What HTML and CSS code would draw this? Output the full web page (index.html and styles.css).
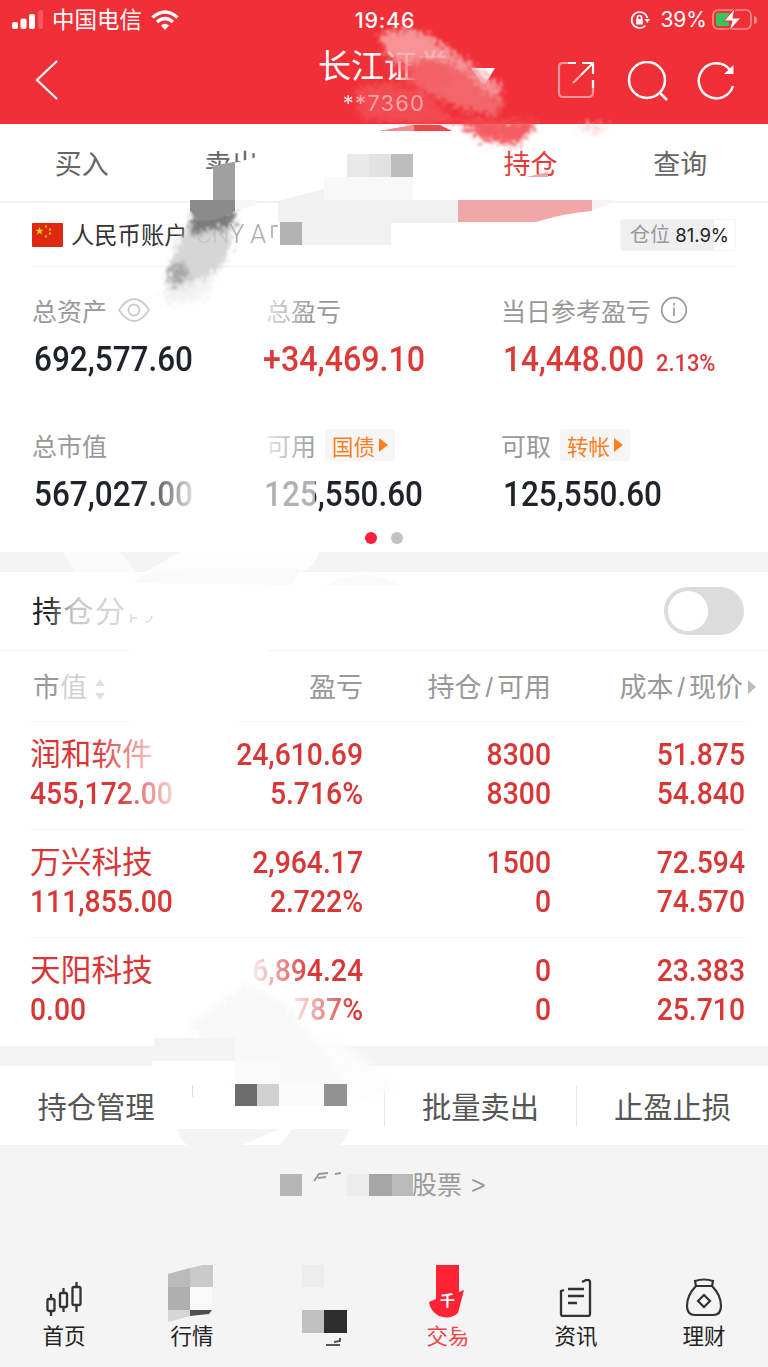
FILE: index.html
```
<!DOCTYPE html>
<html lang="zh-CN">
<head>
  <meta charset="UTF-8">
  <meta name="viewport" content="width=device-width, initial-scale=1.0">
  <title>持仓</title>
  <link rel="stylesheet" href="styles.css">
</head>
<body>
<header>
  <div class="status">
    <div class="status-left">
      <svg width="32" height="20" viewBox="0 0 32 20" fill="#fff"><rect x="0" y="12" width="6" height="7" rx="2"/><rect x="8.5" y="8.500" width="6" height="10.500" rx="2"/><rect x="17" y="4" width="6" height="15" rx="2"/><rect x="26" y="0" width="5" height="19" rx="2" opacity=".2"/></svg>
      <span class="carrier">中国电信</span>
      <svg class="wifi" width="28" height="20" viewBox="0 0 28 20" fill="none" stroke="#fff" stroke-width="3.600"><path d="M1.500 7.500Q14-3.500 26.500 7.500M6 12Q14 5 22 12"/><path d="M14 20l-4-4.500q4-3.500 8 0z" fill="#fff" stroke="none"/></svg>
    </div>
    <span class="time">19:46</span>
    <div class="status-right">
      <svg width="20" height="20" viewBox="0 0 20 20" fill="none" stroke="#fff" stroke-width="1.700"><path d="M15.500 15.500A8 8 0 1 1 17.400 8"/><path d="M14.500 9h5.500l-2.700 4z" fill="#fff" stroke="none"/><rect x="6.200" y="9" width="6.600" height="5.500" fill="#fff" stroke="none"/><path d="M7.500 9V7.500a2 2 0 0 1 4 0V9"/></svg>
      <span class="percent">39%</span>
      <svg width="46" height="24" viewBox="0 0 46 24"><rect x="1" y="2" width="38" height="19" rx="5" fill="none" stroke="#fff" stroke-opacity=".45" stroke-width="1.600"/><path d="M6 5h11v13H6q-2 0-2-2V7q0-2 2-2z" fill="#33c759"/><path d="M42 8q3 1 3 4t-3 4z" fill="#fff" opacity=".5"/><path d="M23 0L12 13h8l-3 10 12-13h-8z" fill="#fff" stroke="#f02f36"/></svg>
    </div>
  </div>
  <div class="nav">
    <svg class="back" width="24" height="42" viewBox="0 0 24 42" fill="none" stroke="#fff" stroke-width="2.200"><path d="M22 2L2 21l20 19"/></svg>
    <div class="title">
      <div>
        <h1>长江证券</h1>
        <p>**7360</p>
      </div>
      <svg width="24" height="20" viewBox="0 0 24 20"><path d="M0 0h24L13 18z" fill="#fff"/></svg>
    </div>
    <div class="tools">
      <svg width="38" height="38" viewBox="0 0 38 38" fill="none" stroke="#fff" stroke-width="2.200"><path d="M11 2H6Q2 2 2 6V31Q2 36 6 36H31Q36 36 36 31V20" opacity=".5"/><path d="M11 2h8M25 2h11v11M36 2L24 14M36 19v8"/><path d="M24 14l-8 8" opacity=".6"/></svg>
      <svg width="42" height="40" viewBox="0 0 42 40" fill="none" stroke="#fff" stroke-width="2.500"><circle cx="20" cy="19" r="18"/><path d="M32 31l8 8"/></svg>
      <svg width="40" height="40" viewBox="0 0 40 40" fill="none" stroke="#fff" stroke-width="2.500"><path d="M36 25A17.500 17.500 0 1 1 33 9"/><path d="M36.500 4v9H27z" fill="#fff" stroke="none"/></svg>
    </div>
  </div>
</header>

<nav class="tabs">
  <span>买入</span><span>卖出</span><span></span><span class="on">持仓</span><span>查询</span>
</nav>

<section class="account">
  <div class="account-row">
    <svg width="31" height="24" viewBox="0 0 31 24"><rect width="31" height="24" rx="1" fill="#de2910"/><path d="M7.500 4l1 2.700h2.900L9.100 8.500l.9 2.900-2.500-1.700L5 11.400l.9-2.900-2.300-1.800h2.900z" fill="#ffde00"/><g fill="#f5a50c"><circle cx="14" cy="3.500" r="1.200"/><circle cx="18" cy="6.500" r="1.200"/><circle cx="18" cy="10.500" r="1.200"/><circle cx="14" cy="13.500" r="1.200"/></g></svg>
    <span class="account-name">人民币账户</span>
    <span class="account-en">CNY A</span>
    <span class="position"><i>仓位</i> 81.9%</span>
  </div>
  <div class="summary">
    <div>
      <p class="label">总资产 <svg class="eye" width="32" height="24" viewBox="0 0 32 24" fill="none" stroke="#ccc" stroke-width="1.800"><path d="M1 12Q8 1 16 1t15 11Q24 23 16 23T1 12z"/><circle cx="16" cy="12" r="5.500"/></svg></p>
      <p class="value"><b>692,577.60</b></p>
    </div>
    <div>
      <p class="label">总盈亏</p>
      <p class="value red plus"><b>+34,469.10</b></p>
    </div>
    <div>
      <p class="label">当日参考盈亏 <svg class="info" width="28" height="28" viewBox="0 0 28 28" fill="none" stroke="#999" stroke-width="1.700"><circle cx="14" cy="14" r="12.300"/><path d="M14 11.500V20M14 7v2.500"/></svg></p>
      <p class="value red"><b>14,448.00</b><small>2.13%</small></p>
    </div>
    <div>
      <p class="label">总市值</p>
      <p class="value"><b>567,027.00</b></p>
    </div>
    <div>
      <p class="label">可用 <span class="chip">国债<svg width="9" height="14" viewBox="0 0 9 14"><path d="M0 0l9 7-9 7z" fill="#ff7f1e"/></svg></span></p>
      <p class="value usable"><b>125,550.60</b></p>
    </div>
    <div>
      <p class="label">可取 <span class="chip">转帐<svg width="9" height="14" viewBox="0 0 9 14"><path d="M0 0l9 7-9 7z" fill="#ff7f1e"/></svg></span></p>
      <p class="value"><b>125,550.60</b></p>
    </div>
  </div>
  <div class="dots"><i class="on"></i><i></i></div>
</section>

<section class="holdings">
  <div class="holdings-head">
    <h2>持仓分</h2>
    <span class="switch"></span>
  </div>
  <div class="grid thead">
    <span>市值 <svg width="10" height="24" viewBox="0 0 10 24" fill="#bbb"><path d="M5 2l5 7H0zM5 23l5-7H0z"/></svg></span>
    <span>盈亏</span><span>持仓<i>/</i>可用</span>
    <span>成本<i>/</i>现价<svg class="more" width="8" height="14" viewBox="0 0 8 14"><path d="M0 0l8 7-8 7z" fill="#bbb"/></svg></span>
  </div>
  <div class="grid row">
    <div><em>润和软件</em><b>455,172.00</b></div>
    <div><b>24,610.69</b><b>5.716%</b></div>
    <div><b>8300</b><b>8300</b></div>
    <div><b>51.875</b><b>54.840</b></div>
  </div>
  <div class="grid row">
    <div><em>万兴科技</em><b>111,855.00</b></div>
    <div><b>2,964.17</b><b>2.722%</b></div>
    <div><b>1500</b><b>0</b></div>
    <div><b>72.594</b><b>74.570</b></div>
  </div>
  <div class="grid row">
    <div><em>天阳科技</em><b>0.00</b></div>
    <div><b>6,894.24</b><b>787%</b></div>
    <div><b>0</b><b>0</b></div>
    <div><b>23.383</b><b>25.710</b></div>
  </div>
</section>

<section class="actions">
  <span>持仓管理</span><span></span><span>批量卖出</span><span>止盈止损</span>
</section>

<p class="stock-link">股票 &gt;</p>

<footer>
  <div>
    <svg width="38" height="36" viewBox="0 0 38 36" fill="none" stroke="#333" stroke-width="2.300"><rect x="2.500" y="18" width="7" height="12" rx="1.500"/><path d="M6 13v5M6 30v5"/><rect x="15" y="12" width="7" height="14" rx="1.500"/><path d="M18.500 7v5M18.500 26v5"/><rect x="27.500" y="6" width="8" height="18" rx="1.500"/><path d="M31.500 1v5M31.500 24v7"/></svg>
    <span>首页</span>
  </div>
  <div><span>行情</span></div>
  <div></div>
  <div class="on"><span>交易</span></div>
  <div>
    <svg width="34" height="38" viewBox="0 0 34 38" fill="none" stroke="#333" stroke-width="2.300"><path d="M5 11l-3 1V35q0 2 2 2H29q2 0 2-2V3q0-2-2-2h-2l-4 2M9 10h16M9 17h16M9 24h9"/></svg>
    <span>资讯</span>
  </div>
  <div>
    <svg width="38" height="39" viewBox="0 0 38 39" fill="none" stroke="#333" stroke-width="2.200"><path d="M11 8L10 3q9-3 18 0l-1 5"/><path d="M11 8h16q9 9 9 20 0 9-8 9H10q-8 0-8-9Q2 17 11 8z"/><path d="M19 17l6 6-6 6-6-6z"/></svg>
    <span>理财</span>
  </div>
</footer>

<!-- brush and mosaic marks over the private parts -->
<svg class="marks" width="768" height="1367" viewBox="0 0 768 1367">
  <defs>
    <filter id="rough" x="-20%" y="-20%" width="140%" height="140%"><feTurbulence type="fractalNoise" baseFrequency=".3" numOctaves="3"/><feDisplacementMap in="SourceGraphic" scale="26" xChannelSelector="R" yChannelSelector="G"/><feGaussianBlur stdDeviation="1.600"/></filter>
    <filter id="soft" x="-20%" y="-20%" width="140%" height="140%"><feGaussianBlur stdDeviation="5"/></filter>
    <linearGradient id="fade"><stop offset="0" stop-color="#fff" stop-opacity="0"/><stop offset="1" stop-color="#fff"/></linearGradient>
    <linearGradient id="fadeLeft"><stop offset="0" stop-color="#fff"/><stop offset="1" stop-color="#fff" stop-opacity="0"/></linearGradient>
    <linearGradient id="fadeTitle"><stop offset="0" stop-color="#fff" stop-opacity="0"/><stop offset=".3" stop-color="#fff" stop-opacity=".75"/><stop offset="1" stop-color="#fff" stop-opacity=".85"/></linearGradient>
  </defs>

  <g filter="url(#rough)">
    <path d="M378 36Q410 18 440 42L504 88 492 102 456 82 424 66 390 60z" fill="#f7a4a7" opacity=".85"/>
    <path d="M412 62Q440 50 474 80L506 102 494 116Q456 112 412 84z" fill="#f2656a"/>
    <path d="M396 62l44-2 10 26-46-2z" fill="#f25e63" opacity=".65"/>
    <path d="M354 90Q380 76 420 90L456 122 424 126 360 118z" fill="#f4666b" opacity=".5"/>
    <path d="M450 118L540 122 516 146 482 140z" fill="#f24a50" opacity=".9"/>
    <path d="M574 126h34l-12 7z" fill="#fbc9cb"/>
  </g>
  <path d="M380 131l34-6h26l12 6z" fill="#f1444b"/>
  <path d="M380 131l34-6v6z" fill="#f58e91"/>

  <path d="M203 171l58-15v28h-58z" fill="#fff"/>
  <g filter="url(#rough)">
    <path d="M194 208L236 208Q234 244 222 268L174 294 166 284Q170 250 192 220z" fill="#ccc" opacity=".8"/>
    <path d="M190 214L236 210 232 226 192 236z" fill="#6c6c6c" opacity=".85"/>
    <path d="M168 268l14-6 8 14-16 14z" fill="#888" opacity=".6"/>
    <path d="M164 288l54-14-16 26-38 4z" fill="#eee" opacity=".7"/>
  </g>
  <path d="M213 166l22-4v49q-20 12-35 9l-10-9v-11h23z" fill="#8b8b8b"/>
  <path d="M213 166l22-4v38h-22z" fill="#9f9f9f"/>
  <path d="M235 200h22v5l-22 5z" fill="#f7f7f7"/>
  <path d="M278 201l46-12v11h134v23H391v22H302v-22h-24z" fill="#f1f1f1"/>
  <path d="M324 177h89v23h-89z" fill="#f8f8f8"/>
  <path d="M347 154h22v23h-22z" fill="#e9e9e9"/><path d="M369 154h22v23h-22z" fill="#e2e2e2"/><path d="M391 154h22v23h-22z" fill="#bdbdbd"/>
  <path d="M280 222h22v23h-22z" fill="#b3b3b3"/>
  <path d="M272 238v-12h6" fill="none" stroke="#bbb" stroke-width="2"/>
  <path d="M458 200h134v11Q565 213 536 222h-78z" fill="#efa8a7"/>
  <path d="M592 200h22q-7 7-22 10z" fill="#f8f3f3"/>
  <path d="M526 177l22-5v5z" fill="#efa8a7"/>

  <path d="M257 296h55v30h-55z" fill="url(#fadeLeft)" opacity=".8"/>
  <path d="M138 476h58v40h-58z" fill="url(#fade)" opacity=".9"/>
  <path d="M262 430h56v40h-56z" fill="url(#fadeLeft)" opacity=".8"/>
  <path d="M258 476h57v40h-57z" fill="#fff" opacity=".65"/>
  <path d="M62 552h58l16 20H76z" fill="#fff" opacity=".65"/>
  <path d="M180 552h139q-4 15-18 20H145z" fill="#fdfdfd"/>
  <path d="M134 583q10-14 52-14h115l-10 16z" fill="#fafafa"/>
  <path d="M325 585q40-20 75 0z" fill="#fafafa"/>

  <path d="M48 590h84v42H48z" fill="url(#fadeTitle)"/>
  <path d="M131 614v9M131 618h6M146 622q5 0 6-6" stroke="#ccc" fill="none"/>
  <path d="M130 645h138v10H130zM130 716h108v10H130z" fill="#fff"/>
  <path d="M58 668h50v38H58z" fill="#fff" opacity=".55"/>
  <path d="M94 736h64v38H94z" fill="url(#fade)" opacity=".8"/>
  <path d="M116 776h62v34h-62z" fill="url(#fade)" opacity=".85"/>
  <path d="M246 952h66v38h-66z" fill="url(#fadeLeft)"/>
  <path d="M284 991h72v36h-72z" fill="url(#fadeLeft)"/>

  <path d="M250 1040h90l60 50-90 20z" fill="#fcfcfc" filter="url(#soft)"/>
  <path d="M246 984l40 20 60 78-24 20-84-12-48-66z" fill="#f8f8f8" filter="url(#rough)"/>
  <path d="M155 1038h80v23h-83z" fill="#f3f3f3"/>
  <path d="M152 1061h83v22h-83z" fill="#fff"/>
  <path d="M235 1061h45v22h-45z" fill="#fafafa"/>
  <path d="M186 1084h10v42h-10z" fill="#fff"/>
  <path d="M192.500 1085v12" stroke="#ddd"/>
  <path d="M235 1084h22v22h-22z" fill="#6d6d6d"/><path d="M257 1084h22v22h-22z" fill="#d1d1d1"/><path d="M279 1084h45v22h-45z" fill="#fafafa"/><path d="M324 1084h23v22h-23z" fill="#929292"/>
  <path d="M235 1106h112v23H235z" fill="#fff"/>
  <path d="M177 1129h102l-37 16h-55q-7-6-10-16z" fill="#f4f4f4"/><path d="M292 1129h57q-3 11-10 16h-58z" fill="#f4f4f4"/>

  <path d="M280 1174h22v22h-22z" fill="#b6b6b6"/><path d="M347 1174h22v22h-22z" fill="#ececec"/><path d="M369 1174h23v22h-23z" fill="#a5a5a5"/><path d="M392 1174h21v22h-21z" fill="#bababa"/>
  <path d="M314 1181l5-7 9-1M318 1178l8-1M335 1174l6-1" stroke="#999" stroke-width="2" fill="none"/>

  <path d="M168 1274l22-6v19h-22z" fill="#bababa"/><path d="M190 1268l13-3h10v22h-23z" fill="#c9c9c9"/><path d="M168 1287h22v23h-22z" fill="#afafaf"/><path d="M168 1310h22v6l-22 6z" fill="#d5d5d5"/><path d="M190 1287h22v23h-22z" fill="#f9f9f9"/><path d="M190 1310h22l-3 4-19 2z" fill="#505050"/>
  <path d="M302 1265h22v22h-22z" fill="#ededed"/><path d="M302 1310h22v23h-22z" fill="#c0c0c0"/><path d="M324 1310h23v23h-23z" fill="#2e2e2e"/>
  <path d="M326 1345h14M334 1342l6-1v-3" stroke="#555" stroke-width="2" fill="none"/>
  <path d="M436 1265h23v27l5-2-6 23q-8 7-19 3-9-5-10-14l7-3z" fill="#ff2334"/>
  <text class="mark-qian" x="440" y="1306">千</text>
  <path d="M458 1322h11v13q-5-3-11-6z" fill="#f4f4f4"/>
</svg>
</body>
</html>
```

FILE: styles.css
```
* {
  box-sizing: border-box;
}
body {
  margin: 0;
  position: relative;
  width: 768px;
  height: 1367px;
  overflow: hidden;
  background: #f4f4f4;
  color: #222;
  font-family: "Liberation Sans", "Noto Sans CJK SC", sans-serif;
}
h1, h2, p {
  margin: 0;
  font-weight: 400;
}
i, em {
  font-style: normal;
}
svg {
  flex: none;
}

/* header */
header {
  height: 124px;
  background: #f02f36;
  color: #fff;
}
.status {
  display: grid;
  grid-template-columns: 1fr auto 1fr;
  align-items: center;
  height: 39px;
  padding: 0 10px 0 12px;
  font-family: Inter, "Noto Sans CJK SC", sans-serif;
  font-size: 21px;
}
.status-left, .status-right {
  display: flex;
  align-items: center;
}
.status-right {
  justify-content: flex-end;
}
.carrier {
  margin: -3px 0 0 8px;
  font-size: 22.5px;
}
.wifi {
  margin-left: 9px;
}
.time {
  font-weight: 500;
  font-size: 21.5px;
  letter-spacing: .8px;
}
.percent {
  margin: 0 5px 0 10px;
}
.nav {
  display: grid;
  grid-template-columns: 318px 178px 1fr;
  height: 85px;
}
.back {
  margin: 20px 0 0 35px;
}
.title {
  display: flex;
}
.title div {
  width: 132px;
  text-align: center;
}
.title h1 {
  font-size: 33px;
  line-height: 56px;
  white-space: nowrap;
}
.title p {
  font-family: Inter, sans-serif;
  font-size: 22px;
  line-height: 17px;
  letter-spacing: 1.2px;
  opacity: .85;
}
.title svg {
  margin: 29px 0 0 21px;
}
.tools {
  display: flex;
  justify-content: flex-end;
  gap: 32px;
  padding: 22px 31px 0 0;
}
.tools svg:last-child {
  margin-left: -4px;
}

/* tabs */
.tabs {
  display: grid;
  grid-template-columns: repeat(5, 1fr);
  height: 79px;
  padding: 0 13px 0 7px;
  background: #fff;
  border-bottom: 2px solid #f3f3f3;
  color: #666;
  font-size: 27px;
  line-height: 82px;
  text-align: center;
}
.tabs .on {
  color: #e33b3b;
}

/* account */
.account {
  height: 349px;
  background: #fff;
}
.account-row {
  display: flex;
  align-items: center;
  height: 64px;
  margin: 0 32px;
  border-bottom: 1px solid #f2f2f2;
}
.account-name {
  margin: -2px 0 0 8px;
  font-size: 23.3px;
  color: #333;
}
.account-en {
  margin-left: 8px;
  font-family: Roboto, sans-serif;
  font-weight: 300;
  font-size: 25px;
  color: #aaa;
}
.position {
  margin-left: auto;
  width: 116px;
  height: 32px;
  padding-left: 9px;
  border: 1px solid #f4f4f4;
  border-radius: 3px;
  background: linear-gradient(90deg, #efeff1 81.9%, #fff 81.9%);
  font-family: Inter, "Noto Sans CJK SC", sans-serif;
  font-size: 18.5px;
  line-height: 30px;
  white-space: nowrap;
}
.position i {
  color: #999;
  font-size: 20px;
}
.summary {
  display: grid;
  grid-template-columns: 234px 235px 1fr;
  grid-template-rows: 135px 109px;
  padding: 23px 0 0 32px;
}
.label {
  display: flex;
  align-items: center;
  height: 40px;
  color: #999;
  font-size: 25px;
}
.eye {
  margin-left: 11px;
}
.info {
  margin-left: 9px;
}
.chip {
  display: flex;
  align-items: center;
  gap: 4px;
  height: 32px;
  margin-left: 9px;
  padding: 0 7px;
  border-radius: 3px;
  background: #f6f6f6;
  color: #ff7f1e;
  font-size: 21.5px;
}
.value {
  padding: 8px 0 0 2px;
  line-height: 44px;
  white-space: nowrap;
  font-family: Roboto, sans-serif;
  color: #1e222b;
}
.value b {
  display: inline-block;
  width: 153px;
  font-weight: 500;
  font-size: 35px;
  transform: scaleX(.9);
  transform-origin: left;
}
.plus {
  padding-left: 0;
  margin-left: -3px;
}
.plus b {
  transform: scaleX(.92);
}
.usable {
  padding-left: 0;
  margin-left: -2px;
}
.value small {
  font-weight: 500;
  font-size: 24px;
  display: inline-block;
  transform: scaleX(.91);
  transform-origin: left;
}
.red {
  color: #dc3a38;
}
.dots {
  display: flex;
  justify-content: center;
  gap: 14px;
  margin-top: -2px;
}
.dots i {
  width: 12px;
  height: 12px;
  border-radius: 50%;
  background: #c2c2c2;
}
.dots .on {
  background: #fb1f38;
}

/* holdings */
.holdings {
  height: 474px;
  margin-top: 20px;
  background: #fff;
}
.holdings-head {
  display: flex;
  justify-content: space-between;
  align-items: center;
  height: 79px;
  padding: 0 24px 0 32px;
  border-bottom: 1px solid #f3f3f3;
}
.holdings h2 {
  margin-top: -4px;
  font-size: 30px;
  letter-spacing: 1.500px;
}
.switch {
  width: 80px;
  height: 48px;
  padding: 4px;
  border-radius: 24px;
  background: #dcdcdc;
}
.switch::before {
  content: "";
  display: block;
  width: 40px;
  height: 40px;
  border-radius: 50%;
  background: #fff;
}
.grid {
  display: grid;
  grid-template-columns: 150px 183px 188px 194px;
  margin: 0 22px 0 30px;
  border-bottom: 1px solid #f4f4f4;
  text-align: right;
}
.grid > :first-child {
  text-align: left;
}
.thead {
  height: 71px;
  color: #999;
  font-size: 27px;
  line-height: 74px;
  white-space: nowrap;
}
.thead i {
  margin: 0 4px;
}
.thead > :first-child {
  padding-left: 3px;
}
.thead > :first-child svg {
  vertical-align: -4px;
}
.more {
  margin: 0 -11px 0 5px;
  vertical-align: 3px;
}
.row {
  height: 108px;
  padding-top: 12px;
  color: #d93636;
}
.row:last-child {
  border: 0;
}
.row b, .row em {
  display: block;
  height: 39px;
  line-height: 40px;
}
.row em {
  font-size: 30.700px;
  line-height: 42px;
}
.row b {
  font-family: Roboto, sans-serif;
  font-size: 32px;
  font-weight: 500;
  transform: scaleX(.885);
  transform-origin: right;
}
.row > :first-child b {
  transform-origin: left;
}

/* actions */
.actions {
  display: grid;
  grid-template-columns: repeat(4, 1fr);
  align-items: center;
  height: 79px;
  margin-top: 20px;
  background: #fff;
  color: #555;
  font-size: 29.300px;
  line-height: 44px;
  text-align: center;
}
.actions span {
  height: 40px;
}
.actions span + span {
  border-left: 1px solid #e6e6e6;
}
.stock-link {
  padding-left: 412px;
  color: #999;
  font-size: 25px;
  line-height: 80px;
  word-spacing: 2px;
}

/* bottom bar */
footer {
  display: grid;
  grid-template-columns: repeat(6, 1fr);
  height: 97px;
  margin-top: 45px;
}
footer div {
  display: flex;
  flex-direction: column;
  align-items: center;
  justify-content: flex-end;
  gap: 4px;
  padding-bottom: 14px;
  font-size: 21.500px;
  line-height: 32px;
}
footer .on {
  color: #f0444d;
}

.marks {
  position: absolute;
  left: 0;
  top: 0;
  pointer-events: none;
}
.mark-qian {
  font-family: "Noto Sans CJK SC", sans-serif;
  font-size: 15px;
  font-weight: 700;
  fill: #fff;
}
```
